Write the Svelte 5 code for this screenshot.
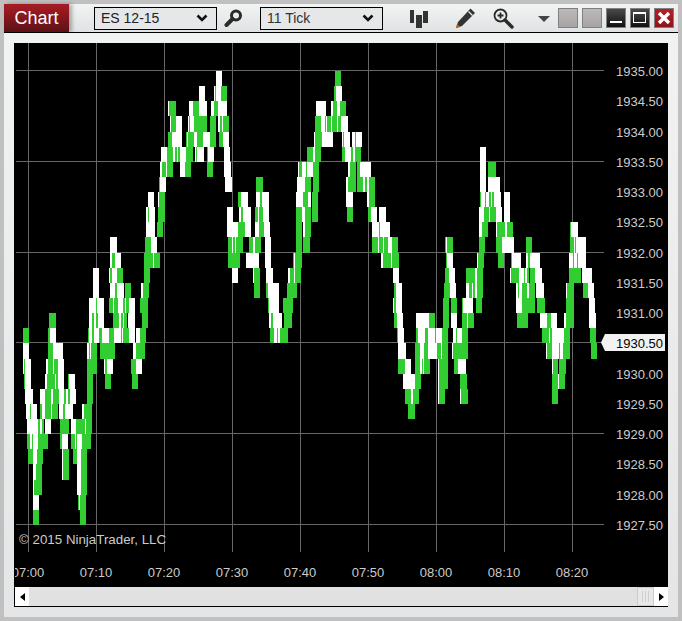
<script>
  const rowData = [
    "216-222W 335-341G",
    "199-205W 214-215W 215-216G 216-221W 221-227G 334-336G 336-342W",
    "168-169W 169-176G 189-193W 193-199G 199-207W 211-214W 214-218G 218-227W 316-326W 331-333W 333-337G 337-340W 340-346G",
    "170-171W 171-176G 176-182W 188-189W 189-190G 190-194W 194-207G 210-216G 218-220W 220-222G 222-223W 223-229G 315-321G 321-325W 325-326G 326-327W 327-331G 331-332W 332-337G 337-338W 338-341G 341-348W",
    "168-172G 172-182W 186-187G 187-188W 188-194G 194-197W 197-203G 203-210W 210-216G 219-223G 223-229W 314-315W 315-322G 322-333W 342-343W 343-344G 344-350W 352-355W 355-356G 356-362W",
    "161-167W 167-173G 173-175W 175-177G 177-178W 178-180G 180-186W 186-193G 195-196W 196-197G 197-204W 207-208G 208-214W 224-230W 307-313G 313-315W 315-321G 342-345G 345-351W 351-353G 353-355W 355-361G 480-486W",
    "160-162W 162-166G 166-167W 167-173G 180-185W 185-191G 207-213G 224-231W 298-299W 299-302G 302-306W 306-307G 307-313W 313-319G 348-350W 350-356G 357-360G 360-371W 480-486W 488-496G",
    "159-160G 160-166W 225-232W 256-263G 297-305W 305-311G 313-319G 346-348W 348-356G 357-363G 363-365W 365-367G 367-369W 369-375G 480-486W 488-500W",
    "148-154W 158-159W 159-165G 238-241G 241-248W 256-260W 260-262G 262-269W 296-303W 303-308G 308-311W 312-318G 346-353W 367-369W 369-375G 480-481G 481-485W 485-486G 486-489W 489-491G 491-492W 492-494G 494-501W 504-510W",
    "146-148W 148-149G 149-155W 158-165G 227-233W 239-241W 241-243G 243-251W 255-258G 258-259W 259-263G 263-269W 296-302G 302-305W 305-311G 312-318G 347-353G 368-371G 371-377W 379-386W 479-484W 484-489G 489-490W 490-496G 496-502W 504-510W",
    "146-155W 157-163G 227-238W 238-245G 245-251W 255-259W 259-264G 264-270W 296-302G 303-305W 305-311G 372-379W 379-380G 380-390W 479-482W 482-488G 496-497W 497-505G 505-507W 507-513G 570-571G 571-578W",
    "110-117W 145-151G 151-157W 228-232G 232-233W 233-235G 235-236W 236-243G 249-253G 253-255W 255-261G 265-271W 296-302G 303-310G 372-378G 378-379W 379-383G 383-384W 384-388G 388-392W 392-398G 445-446G 446-447W 447-453G 479-485G 496-502G 502-514W 526-532G 570-574G 574-575W 575-576G 576-586W",
    "110-112W 112-115G 115-121W 144-153G 153-154W 154-160G 228-240G 246-259W 265-271W 293-294G 294-295W 295-302G 381-383W 383-391G 391-392W 392-399G 446-447G 447-453W 477-478W 478-484G 498-504G 511-512G 512-521W 526-528W 528-530G 530-540W 569-573W 573-574G 574-577W 577-578G 578-586W",
    "93-99W 109-110W 110-112G 112-117W 117-123G 144-150G 232-238W 253-254W 254-260G 266-273W 288-290W 290-294G 294-295W 295-301G 393-399W 445-449G 449-455W 466-475G 475-477W 477-483G 510-511W 511-519G 519-524W 524-525G 525-527W 527-529G 530-535G 535-542W 569-581G 582-592W",
    "93-99W 110-115W 115-117G 117-124W 125-131G 141-143W 143-149G 254-260G 266-268G 268-279W 287-297G 394-396G 396-402W 444-450G 450-456W 466-469W 469-472G 472-473W 473-475G 475-477W 477-483G 516-518W 518-519G 519-522W 522-527G 527-529W 529-535G 536-544W 566-567W 567-574G 583-588G 588-594W",
    "89-96W 96-97G 97-104W 109-113G 113-114W 114-118G 118-123W 123-125G 125-126W 126-129G 129-135W 140-148G 268-269G 269-279W 283-293G 393-394W 394-396G 396-402W 443-449G 451-457G 462-463G 463-473W 476-482G 516-522W 522-535G 537-545G 566-574G 589-595W",
    "49-56G 89-92W 92-94G 94-96W 96-98G 98-104W 113-119G 119-121W 121-123G 123-124W 124-127G 128-135W 142-148G 269-271W 271-273G 273-282W 284-292G 394-397G 397-403W 416-429W 429-435G 443-449G 451-457W 462-467G 467-468W 468-474G 517-528G 540-547W 547-551G 551-557W 564-566W 566-574G 589-596W",
    "23-29G 48-50G 50-56W 88-89G 89-92W 92-94G 94-99W 99-100G 100-102G 102-109W 109-114G 114-121W 121-122G 122-123W 123-129G 129-135W 136-140W 140-146G 270-274G 274-277W 277-278G 278-280W 280-288G 397-398G 398-404W 416-418G 418-425W 425-428G 428-435W 435-436G 436-442W 442-448G 453-456W 456-457G 457-462W 462-468G 542-549G 549-550W 550-552G 552-564W 564-570G 590-596G",
    "23-29W 48-53G 53-63W 87-89W 89-90G 90-91W 91-97G 100-115G 133-136W 136-145G 398-406W 415-420G 420-424W 424-428G 428-437W 437-441G 441-442W 442-448G 452-453W 453-468G 546-547W 547-552G 552-559W 559-560G 560-563W 563-570G 591-597G",
    "23-24W 24-25G 25-31W 46-48W 48-53G 53-54W 54-58G 58-64W 87-97G 104-105W 105-107G 107-113W 131-136G 136-142W 398-405G 405-411W 415-420G 420-422W 422-423G 423-424W 424-430G 438-439W 439-448G 454-458G 458-466W 552-553W 553-558G 559-566G",
    "24-25G 25-31W 45-47W 47-55G 55-56W 56-58G 58-64W 68-69G 69-75W 87-93G 105-111G 132-138G 403-415W 415-421G 438-439W 439-448G 460-467G 552-558G 558-559W 559-565G",
    "25-33W 40-45W 45-51G 51-53W 53-59G 59-64W 64-66G 66-68W 68-70G 70-76W 87-93G 405-411G 411-413W 413-419G 438-439W 439-445G 460-461W 461-468G 552-558G",
    "26-30W 30-31G 31-37W 40-42G 42-45W 45-51G 51-52W 52-58G 59-63W 63-65G 65-73W 82-84W 84-92G 408-415G",
    "27-38W 38-40G 40-42W 42-44G 45-51W 60-69G 71-76W 76-85G 85-86W 86-92G",
    "27-30G 30-32W 32-33G 33-38W 38-48G 60-62G 62-68W 71-75G 75-76W 76-77G 77-82W 82-91G",
    "28-33G 33-37W 37-43G 62-63W 63-69G 73-77G 77-81W 81-87G",
    "33-36W 36-42G 62-63W 63-69G 77-81W 81-87G",
    "33-34W 34-42G 77-81W 81-87G",
    "33-39W 78-79G 79-80W 80-86G",
    "33-39G 80-86G"
  ];

  const rowH = 454 / 30;
  const bars = rowData.flatMap((row, k) => {
    const top = Math.round(71 + rowH * k);
    const bottom = Math.round(71 + rowH * (k + 1));
    return row.split(" ").map((seg) => {
      const [a, b] = seg.slice(0, -1).split("-").map(Number);
      return { x: a, y: top, w: b - a, h: bottom - top, fill: seg.endsWith("G") ? "#32cd32" : "#ffffff" };
    });
  });

  const gridX = [28, 96, 164, 232, 300, 368, 436, 504, 572];
  const gridY = [70, 161, 252, 342, 433, 524];
  const times = ["07:00", "07:10", "07:20", "07:30", "07:40", "07:50", "08:00", "08:10", "08:20"];
  const prices = [];
  for (let i = 0; i <= 15; i++) {
    const p = 1935 - i * 0.5;
    if (p !== 1930.5) prices.push({ label: p.toFixed(2), y: 71 + (454 / 15) * i });
  }
</script>

<div class="win">
  <header class="toolbar">
    <div class="tab">Chart</div>
    <div class="combo first"><span>ES 12-15</span>
      <svg width="12" height="8" viewBox="0 0 12 8"><path d="M1.5 1.5 6 6l4.500-4.500" fill="none" stroke="#111" stroke-width="2.600"/></svg>
    </div>
    <svg class="search" width="19" height="18" viewBox="0 0 19 18">
      <circle cx="12" cy="6.500" r="4.500" fill="none" stroke="#2a2a2a" stroke-width="3"/>
      <path d="M8.500 10 2.500 16" stroke="#2a2a2a" stroke-width="4" stroke-linecap="round"/>
    </svg>
    <div class="combo second"><span class="tick">11 Tick</span>
      <svg width="12" height="8" viewBox="0 0 12 8"><path d="M1.500 1.500 6 6l4.500-4.500" fill="none" stroke="#111" stroke-width="2.600"/></svg>
    </div>
    <svg class="candles" width="19" height="19" viewBox="0 0 19 19" fill="#333">
      <rect x="0" y="1" width="4" height="13"/><rect x="6" y="6" width="6" height="13"/><rect x="13" y="2" width="5" height="12"/>
    </svg>
    <svg class="pencil" width="22" height="22" viewBox="0 0 22 22">
      <path d="M15.500 1.500 20 6 7 19 1 21l2-6z" fill="#333"/>
      <path d="M13.500 4.500l4 4" stroke="#e8e9ea" stroke-width="1.200"/>
      <path d="M1 21l1-4 3 3z" fill="#b9641e"/>
    </svg>
    <svg class="zoomicon" width="21" height="21" viewBox="0 0 21 21">
      <circle cx="7.500" cy="7.500" r="6" fill="none" stroke="#2a2a2a" stroke-width="1.800"/>
      <path d="M4.500 7.500h6M7.500 4.500v6" stroke="#2a2a2a" stroke-width="1.800"/>
      <path d="M12 12l7 7" stroke="#2a2a2a" stroke-width="3.400" stroke-linecap="round"/>
    </svg>
    <svg class="caret" width="12" height="6" viewBox="0 0 12 6"><path d="M0 0h12L6 6z" fill="#444"/></svg>
    <div class="btn plain first-plain"></div>
    <div class="btn plain"></div>
    <div class="btn dark min"><i></i></div>
    <div class="btn dark max"><i></i></div>
    <div class="btn close">
      <svg width="14" height="14" viewBox="0 0 14 14"><path d="M2 2l10 10M12 2 2 12" stroke="#fff" stroke-width="3.400"/></svg>
    </div>
  </header>

  <main class="body">
    <div class="chart">
      <svg class="plot" width="653" height="544" viewBox="15 43 653 544">
        {#each gridX as x}
          <line x1={x + 0.5} x2={x + 0.5} y1="43" y2="552" class="grid" />
        {/each}
        {#each gridY as y}
          <line x1="16" x2="604" y1={y + 0.5} y2={y + 0.5} class="grid" />
        {/each}
        <g shape-rendering="crispEdges">
          {#each bars as b}
            <rect x={b.x} y={b.y} width={b.w} height={b.h} fill={b.fill} />
          {/each}
        </g>
        {#each prices as p}
          <text x="616" y={p.y + 5} class="axis">{p.label}</text>
        {/each}
        {#each gridX as x, i}
          <text x={x} y="577" text-anchor="middle" class="axis">{times[i]}</text>
        {/each}
        <text x="19" y="544" class="note">© 2015 NinjaTrader, LLC</text>
        <polygon points="601,342.500 605,334 665,334 665,351 605,351" fill="#f2f2f2" />
        <text x="616" y="348" class="last">1930.50</text>
      </svg>
      <div class="scroll">
        <div class="arrow"><svg width="5" height="8" viewBox="0 0 5 8"><path d="M5 0v8L0 4z" fill="#000"/></svg></div>
        <div class="track"></div>
        <div class="thumb"><i></i><i></i><i></i></div>
        <div class="arrow"><svg width="5" height="8" viewBox="0 0 5 8"><path d="M0 0v8l5-4z" fill="#000"/></svg></div>
      </div>
    </div>
  </main>
</div>

<style>
  :global(body) { margin: 0; background: #c0c0c0; }
  .win {
    width: 682px; height: 621px; box-sizing: border-box; border: 4px solid #c0c0c0;
    display: flex; flex-direction: column; background: #e4e6e7;
    font-family: "Liberation Sans", Arial, sans-serif;
  }
  .toolbar {
    height: 29px; box-sizing: border-box; flex: none; display: flex; align-items: center;
    background: linear-gradient(#f2f3f3, #e1e2e3); border-bottom: 1px solid #000;
  }
  .tab {
    width: 65px; height: 28px; display: flex; align-items: center; justify-content: center;
    color: #fff; font-size: 18px; background: linear-gradient(#a91c25, #5c1216);
    box-shadow: 3px 0 4px rgba(0,0,0,.3);
  }
  .combo {
    width: 123px; height: 23px; box-sizing: border-box; border: 1px solid #000; background: #e6e7e8;
    display: flex; align-items: center; justify-content: space-between; padding: 0 8px 0 6px;
    font-size: 14px; color: #222;
  }
  .combo.first { margin-left: 25px; }
  .combo.second { margin-left: 17px; }
  .tick { color: #333; }
  .search { margin-left: 7px; }
  .candles { margin-left: 27px; }
  .pencil { margin-left: 26px; }
  .zoomicon { margin-left: 16px; margin-top: 1px; }
  .caret { margin-left: 24px; margin-top: 1px; }
  .btn { width: 20px; height: 20px; box-sizing: border-box; margin-left: 4px; position: relative; border: 1px solid #808080; }
  .first-plain { margin-left: 8px; }
  .plain { background: linear-gradient(#bdb9b9, #a8a4a4); }
  .dark { background: linear-gradient(#4a4a4a, #101010); }
  .min i { position: absolute; left: 3px; right: 3px; bottom: 4px; height: 2px; background: #fff; }
  .max i { position: absolute; left: 2px; right: 3px; top: 3px; bottom: 4px; border: 1px solid #fff; border-top-width: 2px; }
  .close { background: linear-gradient(#b32028, #8c151c); display: flex; align-items: center; justify-content: center; }
  .body {
    flex: 1; display: flex; padding: 10px 10px 10px 10px;
    background: linear-gradient(#f1f3f3, #e3e5e6);
  }
  .chart {
    width: 654px; height: 564px; box-sizing: border-box; background: #000;
    border-left: 1px solid #000; border-bottom: 1px solid #000; display: flex; flex-direction: column;
  }
  .plot { display: block; flex: none; }
  .grid { stroke: #666; stroke-width: 1; }
  .axis { font-size: 13px; fill: #ccc; }
  .note { font-size: 13.330px; fill: #ccc; }
  .last { font-size: 13px; fill: #000; }
  .scroll { flex: 1; display: flex; background: #e1e1e1; }
  .arrow { width: 14px; background: #fff; display: flex; align-items: center; justify-content: center; }
  .track { flex: 1; }
  .thumb {
    width: 17px; box-sizing: border-box; border: 1px solid #ccc; background: #e8e8e8;
    display: flex; gap: 2px; align-items: center; justify-content: center;
  }
  .thumb i { width: 1px; height: 11px; background: #cfcfcf; }
</style>
